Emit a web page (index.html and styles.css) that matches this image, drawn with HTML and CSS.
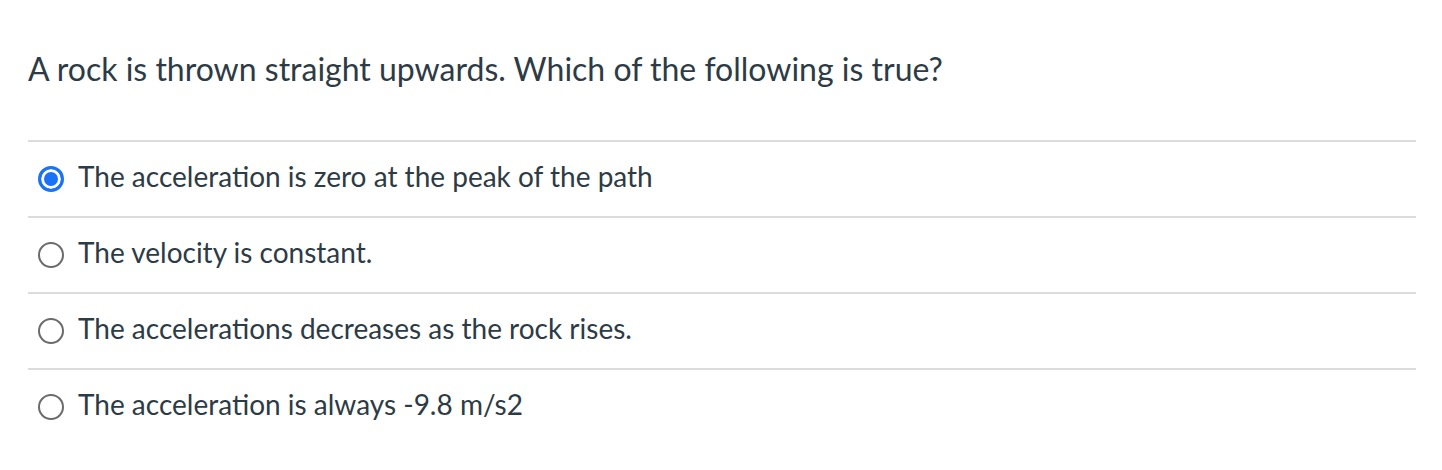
FILE: index.html
```html
<!DOCTYPE html>
<html>
<head>
<meta charset="utf-8">
<link rel="stylesheet" href="styles.css">
</head>
<body>
<div class="question">
  <div class="prompt">A rock is thrown straight upwards. Which of the following is true?</div>
  <div class="answers">
    <label class="answer">
      <span class="radio checked"></span>
      <span class="text">The acceleration is zero at the peak of the path</span>
    </label>
    <label class="answer">
      <span class="radio"></span>
      <span class="text">The velocity is constant.</span>
    </label>
    <label class="answer">
      <span class="radio"></span>
      <span class="text">The accelerations decreases as the rock rises.</span>
    </label>
    <label class="answer last">
      <span class="radio"></span>
      <span class="text">The acceleration is always -9.8 m/s2</span>
    </label>
  </div>
</div>
</body>
</html>
```
FILE: styles.css
```css
html, body {
  margin: 0;
  padding: 0;
  background: #fff;
}
body {
  font-family: Lato, "Liberation Sans", sans-serif;
  color: #2d3b45;
}
.question {
  width: 1388px;
  padding: 48px 0 0 28px;
}
.prompt {
  font-size: 32px;
  line-height: 44px;
  height: 44px;
  margin-bottom: 48px;
  margin-top: -1px;
  padding-bottom: 1px;
}
.answers {
  border-top: 2px solid #dcdcdc;
}
.answer {
  display: flex;
  align-items: center;
  height: 74px;
  border-bottom: 2px solid #dcdcdc;
  padding-left: 10px;
  gap: 14px;
}
.answer.last {
  border-bottom: none;
}
.radio {
  box-sizing: border-box;
  width: 26px;
  height: 26px;
  border-radius: 50%;
  border: 2px solid #6b6b6b;
  background: #fff;
  flex: none;
}
.radio.checked {
  border: 3px solid #1a73f7;
  background: #1a73f7;
  box-shadow: inset 0 0 0 3px #fff;
}
.text {
  font-size: 28px;
  line-height: 34px;
  margin-top: -6px;
}
```
